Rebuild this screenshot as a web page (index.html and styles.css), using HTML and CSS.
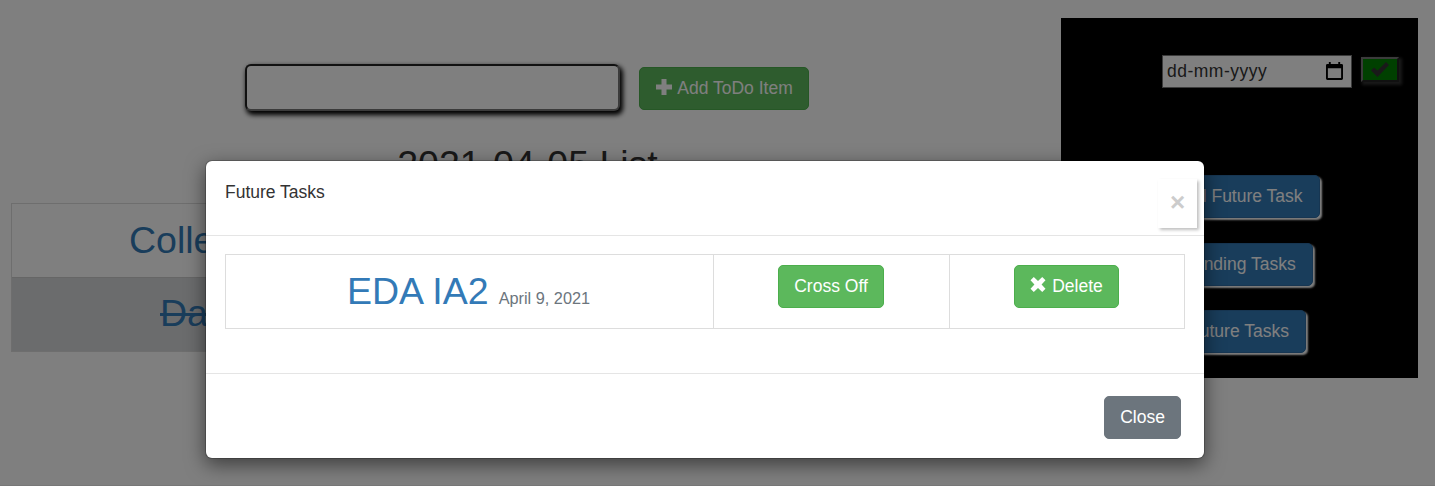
FILE: index.html
```
<!DOCTYPE html>
<html lang="en">
<head>
<meta charset="utf-8">
<title>ToDo List</title>
<link rel="stylesheet" href="styles.css">
</head>
<body>
<div class="page">
  <main class="main">
    <form class="add-form">
      <input class="add-input" type="text" aria-label="New item">
      <button class="btn btn-success btn-add" type="button">
        <svg class="icon-plus" viewBox="0 0 18 18"><path d="M6.500 1h5v5.500H17v5h-5.500V17h-5v-5.500H1v-5h5.500z"/></svg>
        <span>Add ToDo Item</span>
      </button>
    </form>
    <h2 class="title">2021-04-05 List</h2>
    <div class="list">
      <div class="list-row"><a class="item">College</a></div>
      <div class="list-row crossed"><a class="item">Data</a></div>
    </div>
  </main>
  <aside class="panel">
    <div class="date-row">
      <div class="date-input">
        <span>dd-mm-yyyy</span>
        <svg class="icon-calendar" viewBox="0 0 18 20"><path d="M3 0h2v2h8V0h2v2h1.500Q18 2 18 3.500v14Q18 19 16.500 19h-15Q0 19 0 17.500v-14Q0 2 1.500 2H3zM2 6.500V17h14V6.500z" fill-rule="evenodd"/></svg>
      </div>
      <button class="check" type="button" aria-label="Apply">
        <svg class="icon-check" viewBox="0 0 18 15"><path d="M0 8.500L3 5.500L6.500 8.500L15 0L18 3L6.500 15z"/></svg>
      </button>
    </div>
    <div class="actions">
      <button class="btn btn-primary add-future" type="button">Add Future Task</button>
      <button class="btn btn-primary pending" type="button">Pending Tasks</button>
      <button class="btn btn-primary future" type="button">Future Tasks</button>
    </div>
  </aside>
</div>
<div class="backdrop">
  <section class="modal" role="dialog">
    <header class="modal-header">
      <span>Future Tasks</span>
      <button class="close" type="button">×</button>
    </header>
    <div class="modal-body">
      <div class="task">
        <div class="cell task-name"><a class="item">EDA IA2</a><small class="date">April 9, 2021</small></div>
        <div class="cell"><button class="btn btn-success cross-off" type="button">Cross Off</button></div>
        <div class="cell"><button class="btn btn-success delete" type="button">
          <svg class="icon-remove" viewBox="0 0 16 16"><path d="M3.500 0L8 4.200L12.500 0L16 3.500L11.800 8L16 12.500L12.500 16L8 11.800L3.500 16L0 12.500L4.200 8L0 3.500z"/></svg>
          <span>Delete</span>
        </button></div>
      </div>
    </div>
    <footer class="modal-footer"><button class="btn btn-secondary" type="button">Close</button></footer>
  </section>
</div>
</body>
</html>
```
FILE: styles.css
```
* { box-sizing: border-box; }
body {
  margin: 0;
  height: 486px;
  overflow: hidden;
  background: #fff;
  color: #333;
  font: 17.5px/25px "Liberation Sans", Arial, sans-serif;
}
svg { fill: currentColor; display: block; flex: none; }
.page {
  display: flex;
  align-items: flex-start;
  height: 486px;
  padding: 18px 17px 0 11px;
  border-bottom: 1px solid #eee;
}
.main { width: 1033px; margin-right: 17px; }
.add-form { display: flex; gap: 19px; padding: 46px 0 0 234px; align-items: flex-start; }
.add-input {
  width: 375px;
  height: 47px;
  border: 2px solid;
  border-color: #222 #777 #777 #222;
  border-radius: 6px;
  box-shadow: 2px 3px 5px 1px #000;
  background: #fff;
}
.btn {
  display: inline-flex;
  align-items: center;
  justify-content: center;
  height: 43px;
  padding: 0;
  border: 1px solid;
  border-radius: 5px;
  color: #fff;
  font: inherit;
  white-space: nowrap;
}
.btn-success { background: #5cb85c; border-color: #4cae4c; }
.btn-primary { background: #337ab7; border-color: #2e6da4; box-shadow: 2px 2px 2px #fff; }
.btn-secondary { width: 77px; background: #6c757d; border-color: #6c757d; }
.btn-add { width: 170px; margin-top: 3px; gap: 4px; }
.icon-plus { width: 18px; height: 18px; margin-bottom: 4px; }
.title {
  margin: 33px 0 0;
  font-size: 37.5px;
  font-weight: 400;
  line-height: 41px;
  text-align: center;
}
.list { width: 1033px; margin-top: 18px; border: 1px solid #ddd; }
.list-row { height: 73px; padding: 11px 0 0 117px; }
.list-row + .list-row { height: 74px; border-top: 1px solid #ccc; }
.list-row.crossed { padding: 10px 0 0 148px; background: #d6d8db; }
.crossed .item { text-decoration: line-through; }
.item { color: #337ab7; font-size: 37.5px; line-height: 50px; }
.panel { width: 357px; height: 360px; background: #000; }
.date-row { display: flex; gap: 9px; padding: 37px 0 0 101px; }
.date-input {
  display: flex;
  align-items: center;
  justify-content: space-between;
  width: 190px;
  height: 33px;
  padding: 0 8px 0 4px;
  border: 1px solid #767676;
  background: #fff;
  letter-spacing: .5px;
}
.icon-calendar { width: 17px; height: 19px; fill: #000; }
.check {
  display: grid;
  place-items: center;
  width: 38px;
  height: 25px;
  margin-top: 2px;
  padding: 0;
  border: 2px solid;
  border-color: #767676 #222 #222 #767676;
  background: green;
  box-shadow: 2px 2px 3px 1px #333;
  color: #333;
}
.icon-check { width: 18px; height: 15px; }
.actions { display: flex; flex-direction: column; align-items: center; gap: 24.5px; margin-top: 87px; padding-right: 1px; }
.add-future { width: 161px; }
.pending { width: 147px; }
.future { width: 134px; }
.backdrop {
  position: absolute;
  inset: 0;
  padding: 160px 0 0 205px;
  background: rgba(0, 0, 0, .5);
}
.modal {
  width: 1000px;
  height: 299px;
  border: 1px solid rgba(0, 0, 0, .2);
  border-radius: 7px;
  background: #fff;
  background-clip: padding-box;
  box-shadow: 0 6px 19px rgba(0, 0, 0, .5);
}
.modal-header {
  display: flex;
  justify-content: space-between;
  height: 75px;
  padding: 18px 7px 0 19px;
  border-bottom: 1px solid #e5e5e5;
}
.modal-header span { padding-top: 1px; }
.close {
  width: 39px;
  height: 49px;
  padding: 0 0 3px;
  border: 0;
  background: #fff;
  box-shadow: 2px 2px 3px rgba(0, 0, 0, .25);
  color: #ccc;
  font: 700 26px/26px "Liberation Sans", Arial, sans-serif;
}
.modal-body { height: 138px; padding: 18px 19px; border-bottom: 1px solid #e5e5e5; }
.task {
  display: grid;
  grid-template-columns: 487px 236px 1fr;
  height: 75px;
  border: 1px solid #ddd;
}
.cell { padding-top: 10px; text-align: center; }
.task-name { padding: 11px 2px 0 0; }
.cell + .cell { padding-right: 1px; border-left: 1px solid #ddd; }
.date { margin-left: 10px; color: #6c757d; font-size: 16.3px; }
.cross-off { width: 106px; }
.delete { width: 105px; gap: 6px; }
.icon-remove { width: 16px; height: 15px; margin-bottom: 4px; }
.modal-footer { display: flex; justify-content: flex-end; padding: 22px 23px 0; }
```
